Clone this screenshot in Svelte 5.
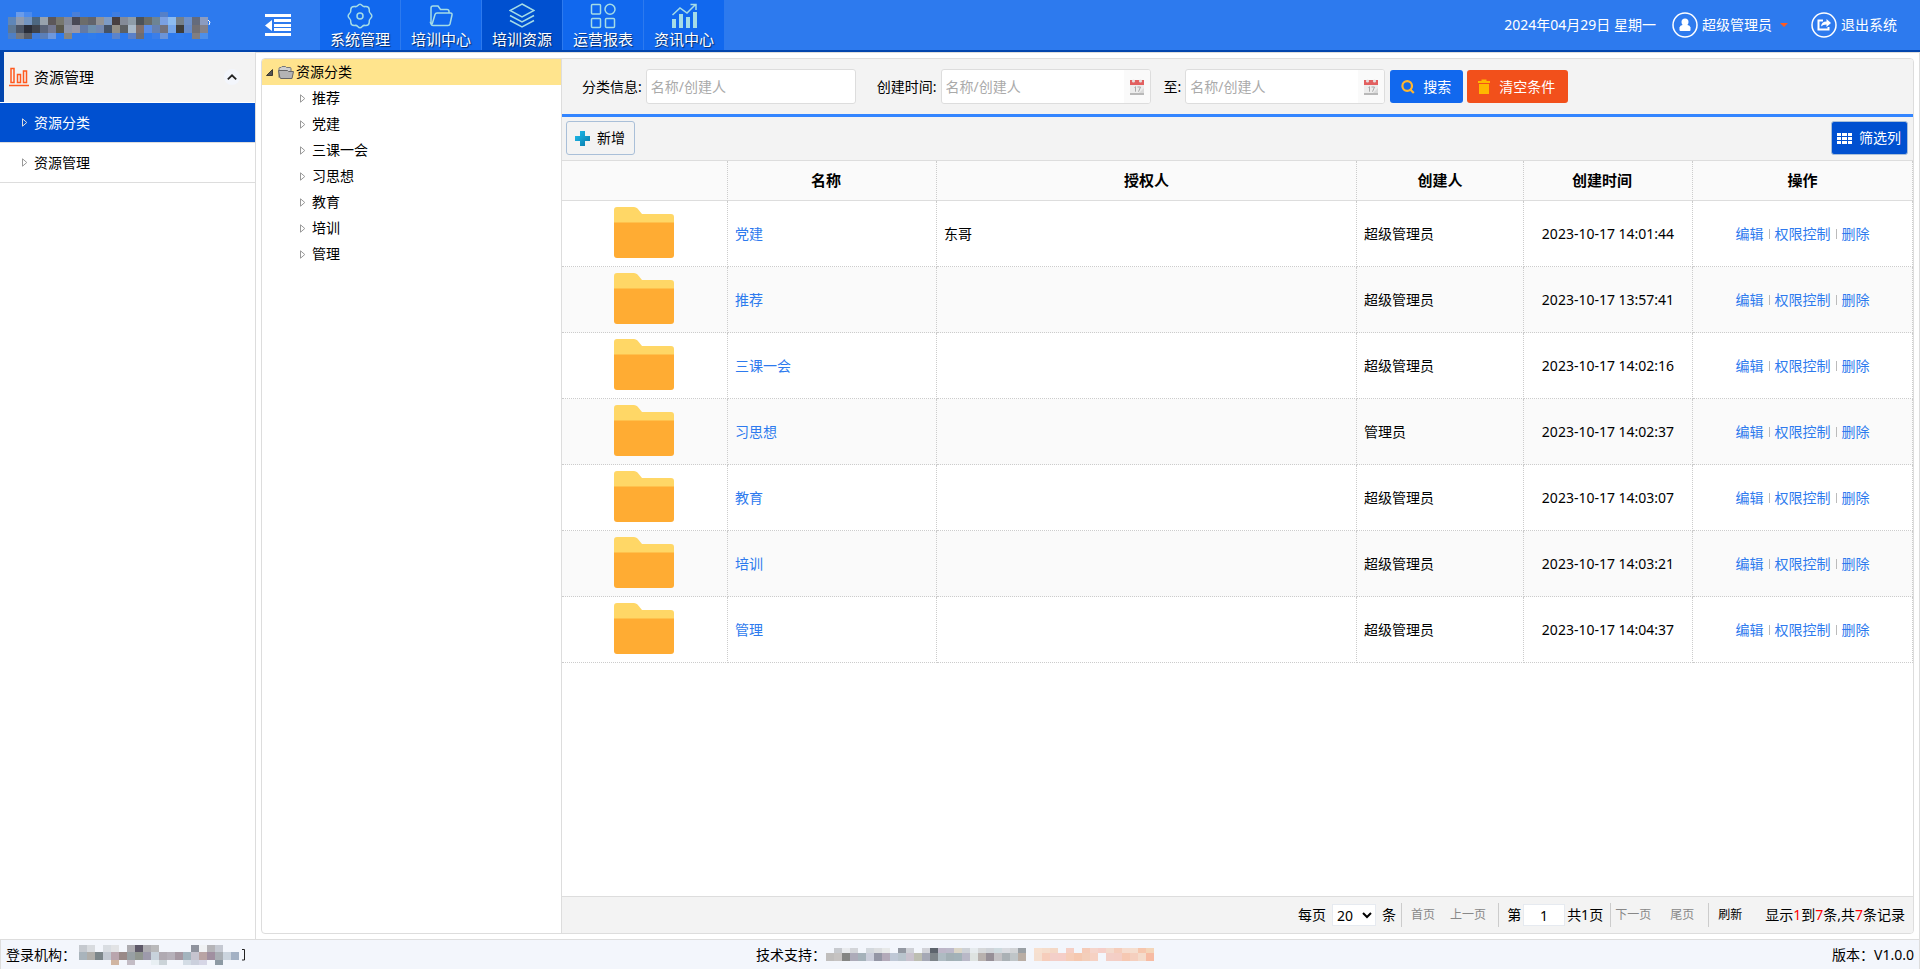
<script lang="ts">
    const navItems = [
        { label: '系统管理', icon: 'gear' },
        { label: '培训中心', icon: 'folder' },
        { label: '培训资源', icon: 'layers' },
        { label: '运营报表', icon: 'grid' },
        { label: '资讯中心', icon: 'chart' },
    ];
    let activeNav = $state('培训资源');

    const menuItems = ['资源分类', '资源管理'];
    let activeMenu = $state('资源分类');
    let menuOpen = $state(true);

    const categories = ['推荐', '党建', '三课一会', '习思想', '教育', '培训', '管理'];

    const rows = [
        { name: '党建', grantee: '东哥', creator: '超级管理员', time: '2023-10-17 14:01:44' },
        { name: '推荐', grantee: '', creator: '超级管理员', time: '2023-10-17 13:57:41' },
        { name: '三课一会', grantee: '', creator: '超级管理员', time: '2023-10-17 14:02:16' },
        { name: '习思想', grantee: '', creator: '管理员', time: '2023-10-17 14:02:37' },
        { name: '教育', grantee: '', creator: '超级管理员', time: '2023-10-17 14:03:07' },
        { name: '培训', grantee: '', creator: '超级管理员', time: '2023-10-17 14:03:21' },
        { name: '管理', grantee: '', creator: '超级管理员', time: '2023-10-17 14:04:37' },
    ];

    let keyword = $state('');
    let startTime = $state('');
    let endTime = $state('');
    let pageSize = $state('20');
    let pageNo = $state('1');

    // masked names, one colour per cell, '-' leaves the cell empty
    const siteMask = [
        '- #6b9cea #4b8bee - - - - - #4a7fd8 - - - - #3f7ee2 - - - - - #5580c8 - - - - -',
        '#5f86b8 #8f9bb0 #7394c0 #4d6780 #98a2ad #5c5759 #77776f #83899a #4a4955 #6c6d6b #62646b #929396 #7d9bc5 #473f41 #848b98 #8e9ca8 #4c5258 #686c69 #6d8494 #7aa0e2 #8cbcf0 #75808a #6e91c9 #646b7c #8c9cc0',
        '#5d7896 #4c5566 #2a2d38 #3f434c #5b6478 #737890 #5a584d #8e94a6 #9997a5 #647aa3 #6f90ad #7388b0 #455266 #928e86 #5c6063 #a9b9c8 #80706c #5b8de5 #6681b0 #73727c #74a6ea #3e3d3a #668bc9 #727074 #84828a',
        '#4f7fc4 #757982 #585c66 #3f7ddd #5b7fb8 #6f98dc - #858683 - - #307cec - #3079ec #5b84cc - #5a80c8 #6e6d73 - #3a7eea #6b94d8 - #307cee - #817e80 #4d8fea',
    ];
    const orgMask = [
        '#c5c9cf #d8dbdf - #d9dde2 #e2e3e5 - #adacb1 #5d5868 #adacb1 #b9b9bb - - - - #8f939e #f0f2f4 #b5b4b8 #c5c9d2 - -',
        '#a9b4bc #b0aeaa #7c868a #c3c9d2 #b9a5ad #998988 #98a0a4 #90968f #9d9aab #c8d2dc #b0aab2 #b6b1ba #a598a2 #a3b4be #c6c4cf #b9a4a4 #a08fa0 #a9aeb4 #cbd4de #a3b1c4',
        '- - - - #d0b5a2 - #c3bcc5 - - #e8eff3 #cbd3d8 - - #d3dce5 #cbd0dd #d6d6e6 - #8d9aa4 - -',
    ];
    const vendorMask = [
        '- #c7cacf #e9ebee #d3d5d9 - #d3d8dd #dcdee0 #e7e9e9 - #9398a2 #cfd1d7 - #d2d3d9 #5d646d #bdb6c8 #bcb9ca #dad5c7 #cdd1d7 #e6ebee #d6d8da #cfd3d8 #cedadf #d9dbe0 #d2d4d7 #9aa0a5',
        '#c0bebd #c6c3c2 #858684 #adabb9 #a5b2ba #cbcedb #9496a5 #b3aab9 #bfc8d6 #b9c4cd #c9c2ce #bdbeb2 #a5a8b5 #7e858a #aebbc2 #a2b0b5 #a2b2b8 #b9b8c7 #dee3e1 #b8b1ae #968f97 #c3c1c4 #aab1b5 #bfc5c8 #b9ada4',
    ];
    const phoneMask = [
        '#f7e0cf #f5ddcc #f4d8c6 - #f5cfc5 - #f5cbb8 #f5d5cc #f5cfc9 #f3dacd #f5cdbb #f6dcce #f5decf #f6c6ad #f4d5b9',
        '#f5dfd0 #f6cdbb #f3cfc9 #f5cec8 #f6cdb8 #f5c8b0 #f3ceba #f6d1c3 - #f3cfc7 #f4cec5 #f6c8b2 #f5cfbe #f4dbcb #f7bba3',
    ];
</script>

{#snippet mosaic(lines: string[], top: number, height: number)}
    {@const width = lines[0].split(' ').length * 8}
    <svg {width} {height} viewBox="0 {top} {width} {height}" shape-rendering="crispEdges" aria-hidden="true">
        {#each lines as line, y}
            {#each line.split(' ') as color, x}
                {#if color !== '-'}
                    <rect x={x * 8} y={y * 8} width="8" height="8" fill={color} />
                {/if}
            {/each}
        {/each}
    </svg>
{/snippet}

{#snippet arrow()}
    <svg class="arrow" width="6" height="9" viewBox="0 0 6 9" aria-hidden="true">
        <path d="M.5 .8v7.4L4.8 4.5z" fill="none" stroke="currentColor" />
    </svg>
{/snippet}

{#snippet calendar()}
    <svg width="14" height="16" viewBox="0 0 14 16" aria-hidden="true">
        <path d="M0 5h14v10H0z" fill="#ededed" />
        <path d="M0 14h14v2H0z" fill="#b9b9b9" />
        <path d="M0 1h14v5H0z" fill="#e26060" />
        <circle cx="3.5" cy="2" r="1.6" fill="#e6e0e0" />
        <circle cx="10.5" cy="2" r="1.6" fill="#e6e0e0" />
        <path d="M4.500 8.500l1-.8v5M7.500 8h3l-2 4.700" fill="none" stroke="#a9a9a9" />
        <path d="M9 14l5-5v5z" fill="#dadada" />
    </svg>
{/snippet}

<div class="app">
    <header class="topbar">
        <div class="logo">
            {@render mosaic(siteMask, 3, 27)}
            <svg width="4" height="27" viewBox="0 0 4 27" aria-hidden="true"><path d="M0 8l2 2-1 3" fill="none" stroke="#fff" /></svg>
        </div>
        <button class="collapse" aria-label="收起菜单">
            <svg width="26" height="23" viewBox="0 0 26 23" fill="#fff" aria-hidden="true">
                <path d="M0 0h26v3H0zM9 5h17v3H9zM9 10h17v3H9zM9 14h17v3H9zM0 19h26v3H0zM7 6v11L0 11.500z" />
            </svg>
        </button>
        <nav class="nav">
            {#each navItems as item}
                <button class="nav-item" class:active={activeNav === item.label} onclick={() => (activeNav = item.label)}>
                    <svg width="26" height="26" viewBox="0 0 26 26" fill="none" stroke="currentColor" stroke-width="1.500" aria-hidden="true">
                        {#if item.icon === 'gear'}
                            <path d="M10.800 2.500Q13 0 15.200 2.500Q16.500 4 18.500 3.500Q22 3.300 22.200 6.500Q21.900 9.300 23.500 10.500Q26.200 13 23.500 15.500Q21.900 16.700 22.200 19.500Q22 22.700 18.500 22.500Q16.500 22 15.200 23.500Q13 26 10.800 23.500Q9.500 22 7.500 22.500Q4 22.700 3.800 19.500Q4.100 16.700 2.500 15.500Q-.2 13 2.500 10.500Q4.100 9.300 3.800 6.500Q4 3.300 7.500 3.500Q9.500 4 10.800 2.500z" />
                            <circle cx="13" cy="13" r="3" />
                        {:else if item.icon === 'folder'}
                            <path d="M3 21V5q0-2 2-2h5l2.500 3.500H19q2 0 2 2V10M3 21q.5 1.500 2 1.500h15q1.500 0 2-1.500L24 12q.3-2-1.500-2H9Q7.500 10 7 11.500L4.500 20q-.7 1.700-1.500 1z" />
                        {:else if item.icon === 'layers'}
                            <path d="M13 1l12 6.500L13 14 1 7.500zM1 12.500L13 19l12-6.500M1 17.500L13 24l12-6.500" />
                        {:else if item.icon === 'grid'}
                            <rect x="1.500" y="1.500" width="9" height="9.500" rx="1" />
                            <circle cx="20" cy="6.200" r="5" />
                            <rect x="1.500" y="15.500" width="9" height="9" rx="1" />
                            <rect x="15.500" y="15.500" width="9" height="9" rx="1" />
                        {:else}
                            <path d="M1.500 12L9 5l7 5 8-8M19.500 1.500H25V7" />
                            <path d="M1 16h4v9H1zM8 11h4v14H8zM15 14h4v11h-4zM22 9h4v16h-4z" fill="currentColor" stroke="none" />
                        {/if}
                    </svg>
                    <span>{item.label}</span>
                </button>
            {/each}
        </nav>
        <div class="user-area">
            <span>2024年04月29日 星期一</span>
            <button class="user">
                <svg width="26" height="26" viewBox="0 0 26 26" aria-hidden="true">
                    <circle cx="13" cy="13" r="12" fill="none" stroke="#fff" stroke-width="1.500" />
                    <circle cx="13" cy="10" r="3.500" fill="#fff" />
                    <path d="M7.500 18v-2.500q.5-2.500 3-2.500h5q2.500 0 3 2.500V18q0 1-1 1h-9q-1 0-1-1z" fill="#fff" />
                </svg>
                超级管理员
                <svg class="caret" width="8" height="4" viewBox="0 0 8 4" aria-hidden="true"><path d="M0 0h8L4 4z" fill="#ff5a1f" /></svg>
            </button>
            <button class="user">
                <svg width="26" height="26" viewBox="0 0 26 26" fill="none" stroke="#fff" aria-hidden="true">
                    <circle cx="13" cy="13" r="12" stroke-width="1.500" />
                    <path d="M12 8.500H7.500v9h10V15" stroke-width="2" />
                    <path d="M10 14.500q.5-5 5.500-5V7l4.500 4-4.500 4v-2.500q-3.500 0-5.500 2z" fill="#fff" stroke="none" />
                </svg>
                退出系统
            </button>
        </div>
    </header>

    <div class="body">
        <aside class="sidebar">
            <button class="menu-title" aria-expanded={menuOpen} onclick={() => (menuOpen = !menuOpen)}>
                <svg width="20" height="20" viewBox="0 0 20 20" fill="none" stroke="#ff5a1f" stroke-width="1.500" aria-hidden="true">
                    <path d="M2 1.500h3v14H2zM8.500 7.500h3v8h-3zM14.500 4h3v11.500h-3zM0 18.500h20" />
                </svg>
                <span>资源管理</span>
                <i class="fold">
                    <svg width="10" height="6" viewBox="0 0 10 6" aria-hidden="true"><path d="M.8 5.300L5 1.300l4.200 4" fill="none" stroke="#222" stroke-width="1.800" /></svg>
                </i>
            </button>
            {#if menuOpen}
                {#each menuItems as item}
                    <button class="menu-item" class:active={activeMenu === item} onclick={() => (activeMenu = item)}>
                        {@render arrow()}
                        {item}
                    </button>
                {/each}
            {/if}
        </aside>

        <main class="main">
            <div class="workspace">
                <div class="tree">
                    <button class="tree-root">
                        <svg width="7" height="7" viewBox="0 0 7 7" aria-hidden="true"><path d="M6.500 .5v6h-6z" fill="#555" stroke="#222" stroke-width=".8" /></svg>
                        <svg class="tree-folder" width="16" height="13" viewBox="0 0 16 13" aria-hidden="true">
                            <path d="M1 11.500V2.500q0-1 1-1h1L4 .5h3.500l1 1H12q1 0 1 1V5" fill="#cfcfcf" stroke="#777" />
                            <path d="M.5 4.500h9l1 1h5l-1.500 7h-11Q2 12.500 1.700 11z" fill="#b4b4b4" stroke="#666" />
                        </svg>
                        资源分类
                    </button>
                    {#each categories as item}
                        <button class="tree-item">
                            {@render arrow()}
                            {item}
                        </button>
                    {/each}
                </div>

                <section class="content">
                    <form class="search" onsubmit={(e) => e.preventDefault()}>
                        <div class="field">
                            <label for="keyword">分类信息:</label>
                            <input id="keyword" type="text" placeholder="名称/创建人" bind:value={keyword} />
                        </div>
                        <div class="field start">
                            <label for="start">创建时间:</label>
                            <div class="date">
                                <input id="start" type="text" placeholder="名称/创建人" bind:value={startTime} />
                                <button type="button" aria-label="选择开始时间">{@render calendar()}</button>
                            </div>
                        </div>
                        <div class="field end">
                            <label for="end">至:</label>
                            <div class="date">
                                <input id="end" type="text" placeholder="名称/创建人" bind:value={endTime} />
                                <button type="button" aria-label="选择结束时间">{@render calendar()}</button>
                            </div>
                        </div>
                        <div class="search-btns">
                            <button class="btn search-btn" type="submit">
                                <svg width="14" height="14" viewBox="0 0 14 14" fill="none" stroke="#ffb62e" stroke-width="2.200" aria-hidden="true"><circle cx="6.200" cy="6" r="4.800" /><path d="M8.800 9l4 4" /></svg>
                                搜索
                            </button>
                            <button class="btn clear-btn" type="reset">
                                <svg width="12" height="16" viewBox="0 0 12 16" fill="#ffb800" aria-hidden="true"><path d="M0 2h3.500V.5h5V2H12v2H0zM1 5h10v10H1z" /></svg>
                                清空条件
                            </button>
                        </div>
                    </form>

                    <div class="toolbar">
                        <button class="btn add-btn">
                            <svg width="15" height="15" viewBox="0 0 15 15" aria-hidden="true">
                                <linearGradient id="plus" x1="0" y1="0" x2="1" y2="1"><stop offset="0" stop-color="#20c0f0" /><stop offset="1" stop-color="#0878a8" /></linearGradient>
                                <path d="M5 0h5v5h5v5h-5v5H5v-5H0V5h5z" fill="url(#plus)" />
                            </svg>
                            新增
                        </button>
                        <button class="btn filter-btn">
                            <svg width="15" height="11" viewBox="0 0 15 11" fill="#fff" aria-hidden="true"><path d="M0 0h4v3H0zM5 0h5v3H5zM11 0h4v3h-4zM0 4h4v3H0zM5 4h5v3H5zM11 4h4v3h-4zM0 8h4v3H0zM5 8h5v3H5zM11 8h4v3h-4z" /></svg>
                            筛选列
                        </button>
                    </div>

                    <div class="table-wrap">
                        <table>
                            <colgroup>
                                <col class="c-icon" />
                                <col class="c-name" />
                                <col />
                                <col class="c-creator" />
                                <col class="c-time" />
                                <col class="c-ops" />
                            </colgroup>
                            <thead>
                                <tr>
                                    <th></th>
                                    <th class="sortable">名称</th>
                                    <th>授权人</th>
                                    <th>创建人</th>
                                    <th class="sortable">创建时间</th>
                                    <th>操作</th>
                                </tr>
                            </thead>
                            <tbody>
                                {#each rows as row}
                                    <tr>
                                        <td class="thumb">
                                            <svg width="60" height="51" viewBox="0 0 60 51" aria-hidden="true">
                                                <path d="M0 17V3q0-3 3-3h17q2 0 3.500 1.500L28 7h29q3 0 3 3v7z" fill="#ffd766" />
                                                <path d="M0 15.500h60V48q0 3-3 3H3q-3 0-3-3z" fill="#ffac33" />
                                            </svg>
                                        </td>
                                        <td><a href="#detail">{row.name}</a></td>
                                        <td>{row.grantee}</td>
                                        <td>{row.creator}</td>
                                        <td class="center">{row.time}</td>
                                        <td>
                                            <div class="ops">
                                                <a href="#edit">编辑</a>
                                                <a href="#auth">权限控制</a>
                                                <a href="#delete">删除</a>
                                            </div>
                                        </td>
                                    </tr>
                                {/each}
                            </tbody>
                        </table>
                    </div>

                    <div class="pager">
                        <div class="pager-group size">
                            <label for="size">每页</label>
                            <select id="size" bind:value={pageSize}>
                                <option>20</option>
                                <option>50</option>
                            </select>
                            <span>条</span>
                        </div>
                        <div class="pager-group links first">
                            <button disabled>首页</button>
                            <button disabled>上一页</button>
                        </div>
                        <div class="pager-group page">
                            <label for="page">第</label>
                            <input id="page" type="text" bind:value={pageNo} />
                            <span>共1页</span>
                        </div>
                        <div class="pager-group links last">
                            <button disabled>下一页</button>
                            <button disabled>尾页</button>
                        </div>
                        <div class="pager-group links">
                            <button class="refresh">刷新</button>
                        </div>
                        <span class="total">显示<b>1</b>到<b>7</b>条,共<b>7</b>条记录</span>
                    </div>
                </section>
            </div>
        </main>
    </div>

    <footer class="status">
        <div class="org">
            登录机构：
            {@render mosaic(orgMask, 1, 20)}
            <svg width="4" height="14" viewBox="0 0 4 14" aria-hidden="true"><path d="M0 1.500h2.500V12H0" fill="none" stroke="#222" /></svg>
        </div>
        <div class="vendor">
            技术支持：
            {@render mosaic(vendorMask, 3, 13)}
            <div class="phone">{@render mosaic(phoneMask, 3, 13)}</div>
        </div>
        <div class="version">版本：V1.0.0</div>
    </footer>
</div>

<style>
    :global(body) { margin: 0; }

    .app {
        display: flex;
        flex-direction: column;
        height: 100vh;
        font-family: "Noto Sans", "Noto Sans CJK SC", sans-serif;
        font-size: 14px;
        line-height: 20px;
        color: #000;
        background: #fff;
    }

    .app * { box-sizing: border-box; }

    button, input, select {
        font: inherit;
        color: inherit;
        margin: 0;
        padding: 0;
        border: 0;
        background: none;
    }

    button { cursor: pointer; white-space: nowrap; }
    svg { display: block; flex-shrink: 0; }
    a { color: #2d7aee; text-decoration: none; }

    .topbar {
        display: flex;
        height: 52px;
        flex-shrink: 0;
        background: #2d7aee;
        border-bottom: 2px solid #0245ad;
        color: #fff;
    }

    .logo {
        display: flex;
        align-items: center;
        width: 265px;
        padding-left: 8px;
    }

    .collapse {
        width: 55px;
        display: flex;
        align-items: center;
    }

    .nav { display: flex; }

    .nav-item {
        width: 81px;
        display: flex;
        flex-direction: column;
        align-items: center;
        padding-top: 3px;
        font-size: 15px;
        line-height: 20px;
        color: #a5dce6;
        background: #1168ee;
        border-right: 1px solid #2d7aee;
    }

    .nav-item span { color: #fff; text-shadow: 1px 1px 1px #042a66; }
    .nav-item.active { background: #0050d0; }

    .user-area {
        margin-left: auto;
        padding-right: 23px;
        display: flex;
        align-items: center;
        gap: 16px;
    }

    .user { display: flex; align-items: center; gap: 4px; }
    .user:last-child { margin-left: 7px; }
    .caret { margin-left: 4px; }

    .body { display: flex; flex: 1; min-height: 0; }

    .sidebar {
        width: 256px;
        flex-shrink: 0;
        border-right: 1px solid #ddd;
    }

    .menu-title {
        width: 100%;
        height: 50px;
        display: flex;
        align-items: center;
        gap: 5px;
        padding: 0 15px 0 5px;
        border-left: 4px solid #0245ad;
        background: #f3f3f3;
        font-size: 15px;
    }

    .fold {
        width: 16px;
        height: 16px;
        margin-left: auto;
        display: flex;
        align-items: center;
        justify-content: center;
        border-radius: 50%;
        background: #f3f6fc;
    }

    .menu-item {
        width: 100%;
        height: 40px;
        display: flex;
        align-items: center;
        gap: 6px;
        padding-left: 22px;
        border-bottom: 1px solid #ddd;
    }

    .menu-item.active { background: #0050d0; color: #fff; }
    .menu-title + .menu-item { margin-top: 1px; }
    .arrow { color: #999; }
    .menu-item.active .arrow { color: #ddd; }

    .main {
        flex: 1;
        min-width: 0;
        padding: 5px;
        border-top: 1px solid #ddd;
        border-right: 1px solid #ddd;
        display: flex;
    }

    .workspace {
        flex: 1;
        min-width: 0;
        display: flex;
        border: 1px solid #ddd;
        border-radius: 4px;
        overflow: hidden;
    }

    .tree {
        width: 300px;
        flex-shrink: 0;
        border-right: 1px solid #ddd;
    }

    .tree-root, .tree-item {
        width: 100%;
        height: 26px;
        display: flex;
        align-items: center;
    }

    .tree-root {
        gap: 5px;
        padding-left: 4px;
        background: #ffe48d;
    }

    .tree-folder { margin-right: -3px; }
    .tree-item { gap: 6px; padding-left: 38px; }

    .content {
        flex: 1;
        min-width: 0;
        display: flex;
        flex-direction: column;
    }

    .search {
        display: flex;
        align-items: center;
        height: 58px;
        padding-left: 20px;
        background: #f3f3f3;
        border-bottom: 3px solid #3385ff;
    }

    .field { display: flex; align-items: center; gap: 4px; }
    .field.start { margin-left: 21px; }
    .field.end { margin-left: 13px; }

    .field > input, .date {
        width: 210px;
        height: 35px;
        border: 1px solid #ddd;
        border-radius: 3px;
        background: #fff;
    }

    .field input { padding: 0 4px; }
    .date { display: flex; overflow: hidden; }
    .end .date { width: 200px; }
    .date input { flex: 1; min-width: 0; }

    .date button {
        width: 26px;
        display: flex;
        align-items: center;
        justify-content: center;
        background: #fafafa;
    }

    input::placeholder { color: #aaa; opacity: 1; }

    .search-btns { display: flex; gap: 4px; margin-left: 5px; }

    .btn {
        display: flex;
        align-items: center;
        gap: 7px;
        height: 33px;
        border-radius: 3px;
    }

    .search-btn { gap: 8px; padding: 0 12px 0 11px; background: #1168ee; color: #fff; }
    .clear-btn { gap: 9px; padding: 0 13px 0 11px; background: #f2501b; color: #fff; }

    .toolbar {
        display: flex;
        align-items: center;
        justify-content: space-between;
        height: 44px;
        padding: 0 5px 1px 4px;
        background: #f3f3f3;
        border-bottom: 1px solid #ddd;
    }

    .toolbar .btn { height: 34px; border: 1px solid #a9bfd8; }
    .toolbar .add-btn { padding: 0 9px 0 8px; }
    .toolbar .filter-btn { padding: 0 6px 0 5px; background: #0050d0; color: #fff; }

    .table-wrap { flex: 1; min-height: 0; overflow: hidden; }

    table {
        width: 100%;
        table-layout: fixed;
        border-collapse: separate;
        border-spacing: 0;
    }

    .c-icon { width: 166px; }
    .c-name { width: 209px; }
    .c-creator { width: 167px; }
    .c-time { width: 169px; }
    .c-ops { width: 220px; }

    th {
        height: 40px;
        padding: 0 0 2px;
        font-size: 15px;
        font-weight: 700;
        background: #fafafa;
        border-right: 1px dotted #ccc;
        border-bottom: 1px solid #ddd;
    }

    .sortable { padding-right: 12px; }

    td {
        height: 66px;
        padding: 0 7px;
        border-right: 1px dotted #ccc;
        border-bottom: 1px dotted #ccc;
    }

    tbody tr:nth-child(even) { background: #fafafa; }
    .center { text-align: center; }
    .thumb { padding: 0 2px 2px 0; }
    .thumb svg { margin: 0 auto; }

    .ops { display: flex; justify-content: center; align-items: center; }

    .ops a + a::before {
        content: "";
        display: inline-block;
        width: 1px;
        height: 10px;
        margin: 0 5px;
        background: #bbb;
    }

    .pager {
        display: flex;
        align-items: center;
        justify-content: flex-end;
        height: 37px;
        padding-right: 8px;
        border-top: 1px solid #ddd;
        background: #f3f3f3;
        white-space: nowrap;
    }

    .pager-group {
        display: flex;
        align-items: center;
        height: 24px;
        border-right: 1px solid #ccc;
    }

    .pager-group:nth-last-child(2) { border-right: 0; }
    .size { gap: 6px; padding-right: 5px; }

    .pager select {
        width: 44px;
        height: 22px;
        border: 1px solid #e6eaf0;
        background: #fff;
    }

    .links { gap: 15px; padding: 0 9px; font-size: 12px; }
    .first { padding-right: 12px; }
    .last { gap: 19px; padding: 0 14px 0 4px; }
    .links button:disabled { color: #888; cursor: default; }
    .page { gap: 2px; padding: 0 7px 0 8px; }

    .pager input {
        width: 42px;
        height: 22px;
        border: 1px solid #e6eaf0;
        background: #fff;
        text-align: center;
    }

    .total { margin-left: 14px; }
    .total b { font-weight: 400; color: #f00; }

    .status {
        display: grid;
        grid-template-columns: 1fr auto 1fr;
        align-items: center;
        height: 30px;
        flex-shrink: 0;
        padding: 0 5px;
        border: 1px solid #ddd;
        border-bottom: 0;
        background: #f3f6fc;
    }

    .org, .vendor { display: flex; align-items: center; }
    .org { gap: 3px; }
    .vendor { padding-right: 10px; }
    .phone { margin-left: 8px; }
    .version { text-align: right; }
</style>
